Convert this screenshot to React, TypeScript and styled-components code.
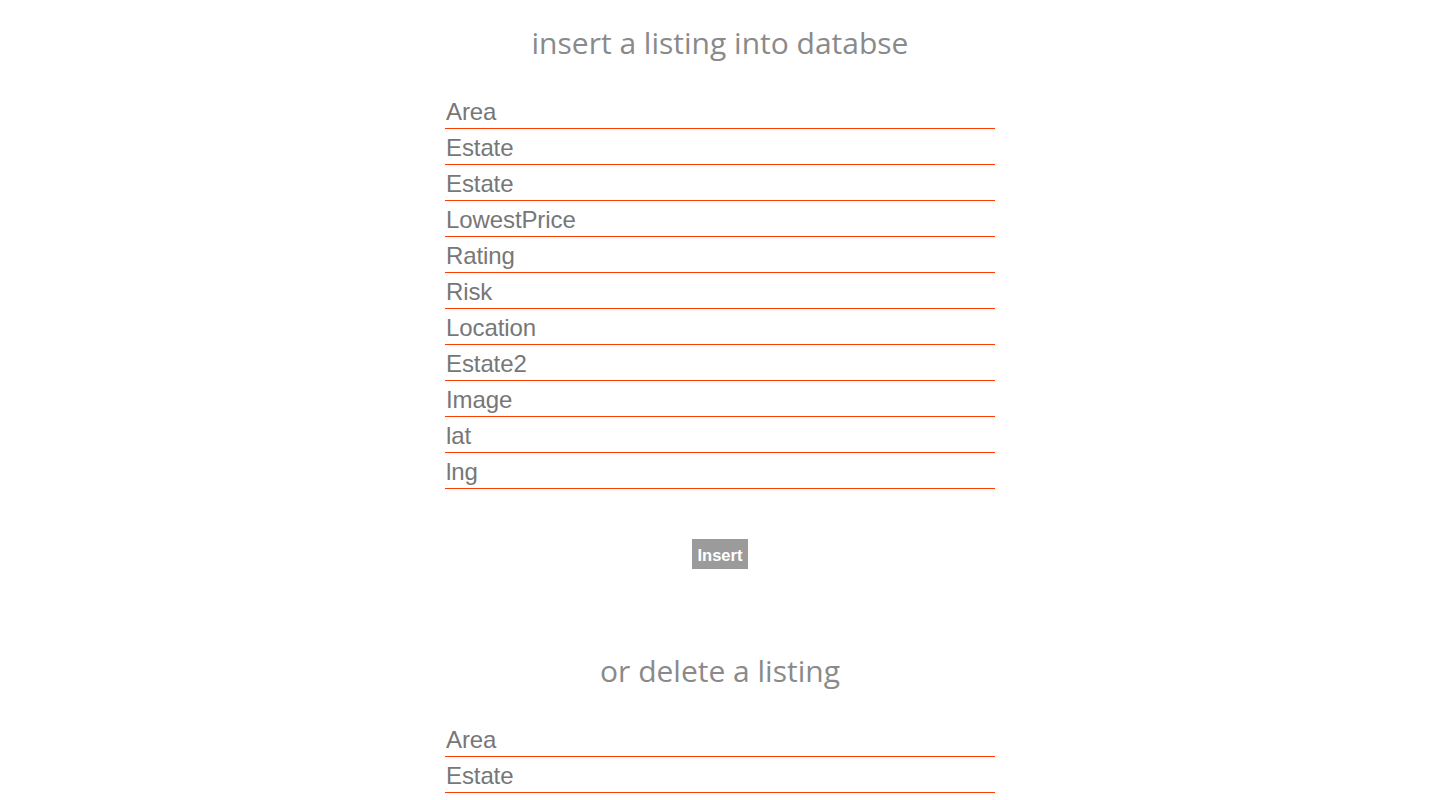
import React, { useState } from "react";
import styled, { createGlobalStyle } from "styled-components";

const insertFields = [
  "Area",
  "Estate",
  "Estate",
  "LowestPrice",
  "Rating",
  "Risk",
  "Location",
  "Estate2",
  "Image",
  "lat",
  "lng",
];

const deleteFields = ["Area", "Estate"];

export default function App() {
  const [values, setValues] = useState<Record<string, string>>({});

  const handleChange = (e: React.ChangeEvent<HTMLInputElement>) => {
    const { name, value } = e.target;
    setValues({ ...values, [name]: value });
  };

  return (
    <>
      <GlobalStyle />
      <Page>
        <Title>insert a listing into databse</Title>
        <Form>
          {insertFields.map((f, i) => (
            <Field
              key={"ins" + i}
              type="text"
              name={"ins" + i}
              placeholder={f}
              value={values["ins" + i] || ""}
              onChange={handleChange}
            />
          ))}
        </Form>
        <Button>Insert</Button>
        <Title $gap={82}>or delete a listing</Title>
        <Form>
          {deleteFields.map((f, i) => (
            <Field
              key={"del" + i}
              type="text"
              name={"del" + i}
              placeholder={f}
              value={values["del" + i] || ""}
              onChange={handleChange}
            />
          ))}
        </Form>
      </Page>
    </>
  );
}

const GlobalStyle = createGlobalStyle`
  body {
    margin: 0;
    background: #fff;
    font-family: "Liberation Sans", Arial, sans-serif;
  }
`;

const Page = styled.div`
  display: flex;
  flex-direction: column;
  align-items: center;
  padding-top: 23px;
`;

const Title = styled.h2<{ $gap?: number }>`
  margin: ${(p) => p.$gap || 0}px 0 30px;
  font-family: "Open Sans", sans-serif;
  font-weight: 400;
  font-size: 30px;
  line-height: 40px;
  color: #8a8a8a;
`;

const Form = styled.div`
  display: flex;
  flex-direction: column;
  width: 550px;
`;

const Field = styled.input`
  box-sizing: border-box;
  height: 36px;
  border: none;
  border-bottom: 1px solid #ff3d00;
  padding: 2px 0 0 1px;
  font-family: "Liberation Sans", Arial, sans-serif;
  font-size: 24px;
  letter-spacing: -0.1px;
  color: #666;
  outline: none;
  background: transparent;

  &::placeholder {
    color: #777;
  }
`;

const Button = styled.button`
  margin-top: 50px;
  width: 56px;
  height: 30px;
  border: none;
  padding: 2px 0 0;
  background: #9b9b9b;
  color: #fff;
  font-family: "Liberation Sans", Arial, sans-serif;
  font-weight: 700;
  font-size: 16.5px;
  cursor: pointer;
`;
